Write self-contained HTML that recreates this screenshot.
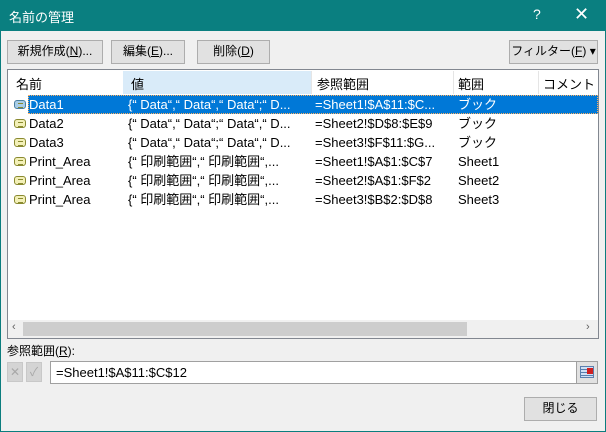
<!DOCTYPE html>
<html><head><meta charset="utf-8"><style>
*{box-sizing:border-box;margin:0;padding:0}
body{width:606px;height:432px;overflow:hidden;background:#f0f0f0;font-family:"Liberation Sans","Noto Sans CJK JP",sans-serif;font-size:12px;color:#000;position:relative}
.frame{position:absolute;left:0;top:0;width:606px;height:432px;border:1px solid #0b7d7e}
.title{position:absolute;left:0;top:0;width:606px;height:31px;background:#0a7f80;color:#fff}
.abs{position:absolute;white-space:nowrap}
.btn{position:absolute;background:#e1e1e1;border:1px solid #adadad;text-align:center;line-height:21px;font-size:12px}
.list{position:absolute;left:7px;top:69px;width:592px;height:270px;background:#fff;border:1px solid #828790;font-size:13px}
.row{position:absolute;left:0;height:19px;width:590px;line-height:19px}
.row span{position:absolute}
.ic{position:absolute;left:6px;top:5px;width:12px;height:9px;border:1px solid #8a8a30;border-radius:3px;background:#f3f0b8}
.ic::after{content:"";position:absolute;left:3px;top:2px;width:5px;height:3px;border-top:1px solid #8a8a30;border-bottom:1px solid #8a8a30}
</style></head><body>
<div class="frame"></div>
<div class="title">
<div class="abs" style="left:9px;top:7px;font-size:13px">名前の管理</div>
<div class="abs" style="left:533px;top:6px;font-size:14px">?</div>
<div class="abs" style="left:574px;top:4px;font-size:18px">✕</div>
</div>
<div class="btn" style="left:7px;top:40px;width:96px;height:24px">新規作成(<u>N</u>)...</div>
<div class="btn" style="left:111px;top:40px;width:74px;height:24px">編集(<u>E</u>)...</div>
<div class="btn" style="left:197px;top:40px;width:73px;height:24px">削除(<u>D</u>)</div>
<div class="btn" style="left:509px;top:40px;width:89px;height:24px">フィルター(<u>F</u>) ▾</div>
<div class="list">
 <div class="abs" style="left:115px;top:1px;width:189px;height:23px;background:#d9ebf9"></div>
 <div class="abs" style="left:303px;top:1px;width:1px;height:23px;background:#e5e5e5"></div>
 <div class="abs" style="left:445px;top:1px;width:1px;height:23px;background:#e5e5e5"></div>
 <div class="abs" style="left:530px;top:1px;width:1px;height:23px;background:#e5e5e5"></div>
 <div class="abs" style="left:8px;top:4px">名前</div>
 <div class="abs" style="left:123px;top:4px">値</div>
 <div class="abs" style="left:309px;top:4px">参照範囲</div>
 <div class="abs" style="left:450px;top:4px">範囲</div>
 <div class="abs" style="left:535px;top:4px">コメント</div>
 <div class="row" style="top:25px"><div class="abs" style="left:20px;top:0;width:570px;height:19px;background:#0078d7;border:1px dotted #ffb060"></div><div class="ic" style="background:#a8cde8;border-color:#4a7fa0"></div><span style="left:21px;color:#fff">Data1</span><span style="left:120px;color:#fff">{“ Data“,“ Data“,“ Data“;“ D...</span><span style="left:307px;color:#fff">=Sheet1!$A$11:$C...</span><span style="left:450px;color:#fff">ブック</span></div>
 <div class="row" style="top:44px"><div class="ic"></div><span style="left:21px">Data2</span><span style="left:120px">{“ Data“,“ Data“;“ Data“,“ D...</span><span style="left:307px">=Sheet2!$D$8:$E$9</span><span style="left:450px">ブック</span></div>
 <div class="row" style="top:63px"><div class="ic"></div><span style="left:21px">Data3</span><span style="left:120px">{“ Data“,“ Data“;“ Data“,“ D...</span><span style="left:307px">=Sheet3!$F$11:$G...</span><span style="left:450px">ブック</span></div>
 <div class="row" style="top:82px"><div class="ic"></div><span style="left:21px">Print_Area</span><span style="left:120px">{“ 印刷範囲“,“ 印刷範囲“,...</span><span style="left:307px">=Sheet1!$A$1:$C$7</span><span style="left:450px">Sheet1</span></div>
 <div class="row" style="top:101px"><div class="ic"></div><span style="left:21px">Print_Area</span><span style="left:120px">{“ 印刷範囲“,“ 印刷範囲“,...</span><span style="left:307px">=Sheet2!$A$1:$F$2</span><span style="left:450px">Sheet2</span></div>
 <div class="row" style="top:120px"><div class="ic"></div><span style="left:21px">Print_Area</span><span style="left:120px">{“ 印刷範囲“,“ 印刷範囲“,...</span><span style="left:307px">=Sheet3!$B$2:$D$8</span><span style="left:450px">Sheet3</span></div>
 <div class="abs" style="left:0;top:250px;width:590px;height:18px;background:#f0f0f0"></div>
 <div class="abs" style="left:15px;top:252px;width:444px;height:14px;background:#cdcdcd"></div>
 <div class="abs" style="left:4px;top:251px;font-size:11px;color:#606060">‹</div>
 <div class="abs" style="left:578px;top:251px;font-size:11px;color:#606060">›</div>
</div>
<div class="abs" style="left:7px;top:342px;font-size:12px">参照範囲(<u>R</u>):</div>
<div class="abs" style="left:7px;top:362px;width:16px;height:20px;background:#d4d4d4;border:1px solid #c8c8c8;color:#a8a8a8;text-align:center;line-height:18px">✕</div>
<div class="abs" style="left:26px;top:362px;width:16px;height:20px;background:#d4d4d4;border:1px solid #c8c8c8;color:#a8a8a8;text-align:center;line-height:18px">✓</div>
<div class="abs" style="left:50px;top:361px;width:548px;height:23px;background:#fff;border:1px solid #a0a0a0"></div>
<div class="abs" style="left:56px;top:365px;font-size:13px">=Sheet1!$A$11:$C$12</div>
<div class="abs" style="left:576px;top:362px;width:21px;height:21px;background:#e1e1e1;border-left:1px solid #a0a0a0"><div style="margin:4px 3px;width:14px;height:12px;border:1px solid #5a7fae;background:repeating-linear-gradient(#cfe0f5 0 2px,#5a7fae 2px 3px)"></div><div style="position:absolute;left:10px;top:6px;width:6px;height:6px;background:#d02020"></div></div>
<div class="btn" style="left:524px;top:397px;width:73px;height:24px">閉じる</div>
</body></html>
